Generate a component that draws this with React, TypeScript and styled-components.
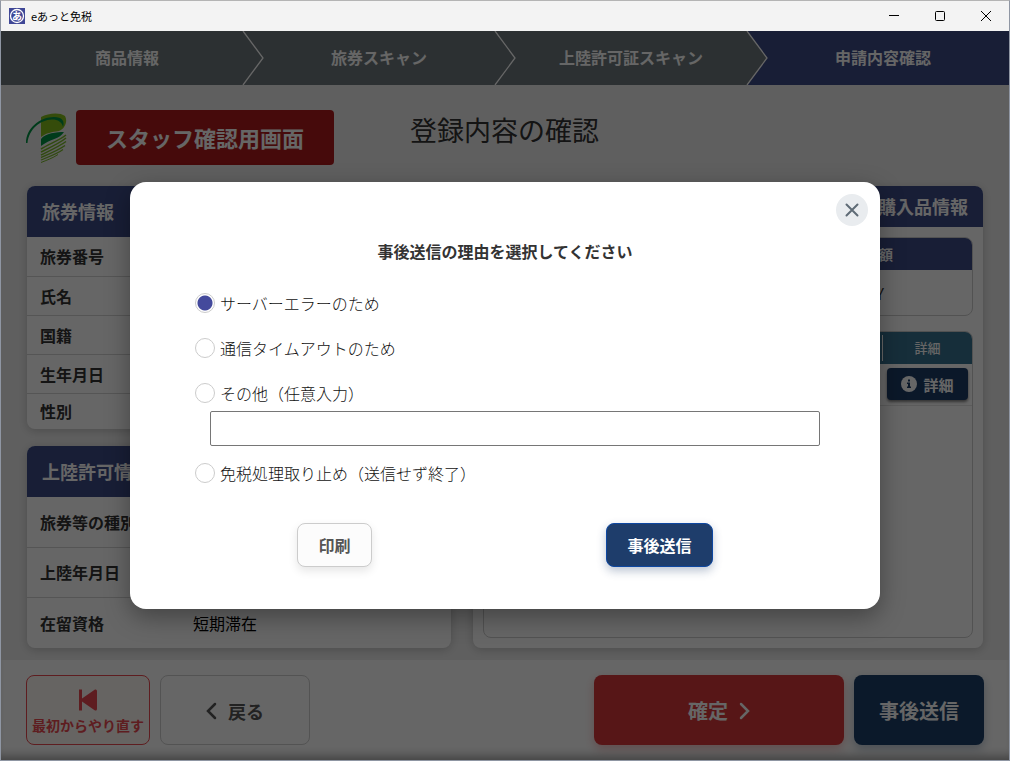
import React, { useState } from "react";
import styled, { createGlobalStyle } from "styled-components";

const Global = createGlobalStyle`
  *, *::before, *::after { box-sizing: border-box; }
  body {
    margin: 0;
    font-family: "Noto Sans CJK JP", "Noto Sans", sans-serif;
    font-size: 16px;
    color: #333;
  }
  button, input { font-family: inherit; }
  button { cursor: pointer; }
`;

const navy = "#3c4b87";
const slate = "#6e787d";

const Frame = styled.div`
  display: flex;
  flex-direction: column;
  min-height: 100vh;
  border: 1px solid #8f96a3;
  border-top-color: #b4b4b4;
`;

const TitleBar = styled.header`
  display: flex;
  align-items: center;
  height: 30px;
  padding-left: 8px;
  background: #f3f3f3;
  color: #000;
`;

const AppIcon = styled.svg`
  width: 16px;
  height: 16px;
  margin-right: 6px;
`;

const AppName = styled.span`
  flex: 1;
  font-size: 11px;
  line-height: 16px;
`;

const WindowButton = styled.button`
  display: flex;
  align-items: center;
  justify-content: center;
  width: 46px;
  height: 30px;
  padding: 0;
  border: 0;
  background: none;
`;

const Body = styled.div`
  position: relative;
  display: flex;
  flex: 1;
  flex-direction: column;
  background: #eee;
`;

const Steps = styled.ol`
  display: grid;
  grid-template-columns: repeat(4, 1fr);
  margin: 0;
  padding: 0;
  list-style: none;
`;

const Step = styled.li<{ $active?: boolean }>`
  position: relative;
  height: 54px;
  background: ${(p) => (p.$active ? navy : slate)};
  color: #fff;
  font-weight: 700;
  line-height: 52px;
  text-align: center;
`;

const StepArrow = styled.svg`
  position: absolute;
  top: 0;
  right: -12px;
  z-index: 1;
  width: 24px;
  height: 54px;
`;

const Main = styled.main`
  display: flex;
  flex: 1;
  flex-direction: column;
  padding: 25px 26px 12px 25px;
`;

const Heading = styled.div`
  display: grid;
  grid-template-columns: 1fr auto 1fr;
  align-items: start;
  margin-bottom: 21px;
`;

const Brand = styled.div`
  display: flex;
  align-items: center;
  gap: 8px;
`;

const Logo = styled.svg`
  width: 42px;
  height: 50px;
`;

const StaffLabel = styled.div`
  width: 258px;
  border-radius: 4px;
  background: #b01b1c;
  color: #fff;
  font-size: 22px;
  font-weight: 700;
  line-height: 55px;
  text-align: center;
`;

const PageTitle = styled.h1`
  margin: 0;
  font-size: 27px;
  font-weight: 400;
  line-height: 40px;
`;

const Columns = styled.div`
  display: grid;
  flex: 1;
  grid-template-columns: 424fr 510fr;
  gap: 22px;
  padding-left: 1px;
`;

const Stack = styled.div`
  display: flex;
  flex-direction: column;
  justify-content: space-between;
  gap: 16px;
`;

const Card = styled.section`
  display: flex;
  flex-direction: column;
  overflow: hidden;
  border-radius: 8px;
  background: #fff;
  box-shadow: 0 2px 10px rgba(0, 0, 0, 0.2);
`;

const CardTitle = styled.h2<{ $right?: boolean }>`
  margin: 0;
  padding: 0 15px;
  background: ${navy};
  color: #fff;
  font-size: 18px;
  font-weight: 700;
  line-height: ${(p) => (p.$right ? 41 : 51)}px;
  text-align: ${(p) => (p.$right ? "right" : "left")};
`;

const Facts = styled.table<{ $row: number; $last: number }>`
  width: 100%;
  border-collapse: collapse;

  tr + tr {
    border-top: 1px solid #d4d4d4;
  }
  th,
  td {
    height: ${(p) => p.$row}px;
    padding: 0 13px;
    line-height: 24px;
    text-align: left;
  }
  tr:last-child > * {
    height: ${(p) => p.$last}px;
  }
  th {
    width: 153px;
    font-weight: 700;
    white-space: nowrap;
  }
  td {
    color: #000;
  }
`;

const Purchase = styled.div`
  display: flex;
  flex: 1;
  flex-direction: column;
  gap: 15px;
  padding: 10px;
`;

const Box = styled.div<{ $grow?: boolean }>`
  flex: ${(p) => (p.$grow ? 1 : "none")};
  overflow: hidden;
  border: 1px solid #ccc;
  border-radius: 8px;
`;

const BoxTable = styled.table`
  width: 100%;
  border-collapse: collapse;
  text-align: right;
`;

const TotalHead = styled.th`
  height: 32px;
  padding: 0 79px;
  background: ${navy};
  color: #fff;
  font-size: 14px;
  font-weight: 700;
  line-height: 20px;
`;

const TotalCell = styled.td`
  height: 45px;
  padding: 0 88px;
`;

const ItemHead = styled.th`
  height: 32px;
  padding: 3px 0;
  background: #377391;
  color: #fff;
  font-size: 13px;
  font-weight: 500;
  line-height: 26px;
  text-align: center;

  &:last-child {
    width: 90px;
  }
  &:last-child > span {
    display: block;
    border-left: 1px solid #fff;
  }
`;

const ItemCell = styled.td`
  height: 41px;
  padding: 0 4px 0 5px;
  border-bottom: 1px solid #e4e4e4;
`;

const DetailButton = styled.button`
  display: flex;
  align-items: center;
  justify-content: center;
  gap: 6px;
  width: 81px;
  height: 32px;
  padding: 0;
  border: 0;
  border-radius: 4px;
  background: #1c3c68;
  box-shadow: 0 2px 3px rgba(0, 0, 0, 0.5);
  color: #fff;
  font-size: 15px;
  font-weight: 700;
`;

const Footer = styled.footer`
  display: flex;
  gap: 10px;
  padding: 15px 25px;
  background: #fff;
  box-shadow: inset 0 -10px 10px -6px rgba(0, 0, 0, 0.35);
`;

const FooterButton = styled.button<{ $kind: "restart" | "back" | "confirm" | "later" }>`
  display: flex;
  flex-direction: ${(p) => (p.$kind === "restart" ? "column" : "row")};
  align-items: center;
  justify-content: center;
  gap: ${(p) => (p.$kind === "restart" ? 3 : 10)}px;
  width: ${(p) => ({ restart: 124, back: 150, confirm: 250, later: 130 })[p.$kind]}px;
  height: 70px;
  margin-left: ${(p) => (p.$kind === "confirm" ? "auto" : 0)};
  padding: 2px 0 0;
  border: ${(p) => ({ restart: "1px solid #ec4a50", back: "1px solid #d0d0d0", confirm: "0", later: "0" })[p.$kind]};
  border-radius: 8px;
  background: ${(p) => ({ restart: "#fffaf6", back: "#fff", confirm: "#d9393b", later: "#1c406a" })[p.$kind]};
  box-shadow: ${(p) =>
    ({
      restart: "none",
      back: "none",
      confirm: "0 4px 10px rgba(217, 57, 59, 0.3)",
      later: "0 4px 10px rgba(28, 64, 106, 0.3)",
    })[p.$kind]};
  color: ${(p) => ({ restart: "#ec4a50", back: "#555", confirm: "#fff", later: "#fff" })[p.$kind]};
  font-size: ${(p) => ({ restart: 14, back: 18, confirm: 20, later: 20 })[p.$kind]}px;
  font-weight: 700;
  line-height: 20px;
`;

const Overlay = styled.div`
  position: absolute;
  inset: 0;
  z-index: 2;
  display: flex;
  align-items: center;
  justify-content: center;
  background: rgba(0, 0, 0, 0.6);
`;

const Dialog = styled.form`
  position: relative;
  width: 750px;
  max-width: 90%;
  padding: 57px 50px 42px;
  border-radius: 16px;
  background: #fff;
  box-shadow: 0 8px 24px rgba(0, 0, 0, 0.35);
`;

const CloseButton = styled.button`
  position: absolute;
  top: 12px;
  right: 12px;
  display: flex;
  align-items: center;
  justify-content: center;
  width: 32px;
  height: 32px;
  padding: 0;
  border: 0;
  border-radius: 50%;
  background: #e9ecef;
`;

const DialogTitle = styled.h2`
  margin: 0 0 28px;
  color: #333;
  font-size: 16px;
  font-weight: 700;
  line-height: 24px;
  text-align: center;
`;

const Reasons = styled.div`
  display: flex;
  flex-direction: column;
  gap: 21px;
  margin-bottom: 38px;
`;

const Reason = styled.label`
  display: flex;
  align-items: center;
  gap: 5px;
  padding-left: 15px;
  color: #111;
  font-weight: 300;
  line-height: 24px;
`;

const Radio = styled.input`
  appearance: none;
  width: 20px;
  height: 20px;
  margin: 0;
  padding: 2px;
  border: 1px solid #ccc;
  border-radius: 50%;

  &:checked {
    background: radial-gradient(circle, #444a9c 7px, #fff 8px);
  }
`;

const OtherReason = styled.div`
  display: flex;
  flex-direction: column;
  gap: 6px;
  margin-bottom: -6px;
`;

const OtherInput = styled.input`
  height: 35px;
  margin: 0 10px 0 30px;
  padding: 0 8px;
  border: 1px solid #767676;
  border-radius: 2px;
  font-size: 16px;
`;

const Actions = styled.div`
  display: flex;
  justify-content: space-around;
`;

const ActionButton = styled.button<{ $primary?: boolean }>`
  height: 44px;
  padding: 0 20px;
  border: 1px solid ${(p) => (p.$primary ? "#0d47a1" : "#ccc")};
  border-radius: 8px;
  background: ${(p) => (p.$primary ? "#1e3d6b" : "#fcfcfc")};
  box-shadow: 0 4px 10px ${(p) => (p.$primary ? "rgba(30, 61, 107, 0.3)" : "rgba(0, 0, 0, 0.1)")};
  color: ${(p) => (p.$primary ? "#fff" : "#555")};
  font-size: 16px;
  font-weight: 700;
`;

function Arrow({ next }: { next: string }) {
  return (
    <StepArrow viewBox="0 0 24 54" aria-hidden="true">
      <rect width="24" height="54" fill={next} />
      <path d="M0 0H2L22 27L2 54H0Z" fill={slate} />
      <path d="M2 0L22 27L2 54" fill="none" stroke="#fff" strokeWidth="1.3" />
    </StepArrow>
  );
}

function BrandLogo() {
  return (
    <Logo viewBox="0 0 42 50" aria-hidden="true">
      <path d="M15 4C22 0 34 -1 39 3C42 8 39 16 33 18C26 19 20 20 15 24Z" fill="#86bf1c" />
      <path d="M0 30C0 15 14 4 28 4C36 4 39 8 37 14C36 9 32 6.500 26 6.500C14 7 3 16 1.500 30Z" fill="#009444" />
      <path d="M15 26C19 20 31 19 38 19C34 26 24 26 15 33Z" fill="#009444" />
      <g fill="none" stroke="#7ab82a" strokeWidth="1.500">
        <path d="M15 36C23 31 34 27 40 22" />
        <path d="M15 39C23 35 34 30 40 25" />
        <path d="M15 42C23 38 34 33 40 28.500" />
        <path d="M15 44.500C22 41.500 33 37 39 32.500" />
        <path d="M15 47C21 44.500 31 41 37 36.500" strokeWidth="1.200" />
        <path d="M15 49.500C20 47.500 27 45 32 41.500" strokeWidth="1" />
      </g>
    </Logo>
  );
}

const passportRows = ["旅券番号", "氏名", "国籍", "生年月日", "性別"];
const landingRows: [string, string][] = [
  ["旅券等の種別", ""],
  ["上陸年月日", ""],
  ["在留資格", "短期滞在"],
];

export default function App() {
  const [reason, setReason] = useState("server");

  const radio = (value: string, text: string) => (
    <Reason>
      <Radio type="radio" name="reason" value={value} checked={reason === value} onChange={() => setReason(value)} />
      {text}
    </Reason>
  );

  return (
    <Frame>
      <Global />
      <TitleBar>
        <AppIcon viewBox="0 0 16 16" aria-hidden="true">
          <rect width="16" height="16" fill="#3f4796" />
          <circle cx="8" cy="8" r="6.5" fill="#3f4796" stroke="#fff" strokeWidth="1.300" />
          <text x="8" y="11.500" fill="#fff" fontSize="10" fontWeight="700" textAnchor="middle">
            あ
          </text>
        </AppIcon>
        <AppName>eあっと免税</AppName>
        <WindowButton type="button" aria-label="最小化">
          <svg width="10" height="10" viewBox="0 0 10 10">
            <path d="M0 4.500H10" stroke="#000" />
          </svg>
        </WindowButton>
        <WindowButton type="button" aria-label="最大化">
          <svg width="10" height="10" viewBox="0 0 10 10">
            <rect x="0.500" y="0.500" width="9" height="9" rx="1" fill="none" stroke="#000" />
          </svg>
        </WindowButton>
        <WindowButton type="button" aria-label="ウィンドウを閉じる">
          <svg width="10" height="10" viewBox="0 0 10 10">
            <path d="M0 0L10 10M10 0L0 10" stroke="#000" />
          </svg>
        </WindowButton>
      </TitleBar>

      <Body>
        <Steps>
          <Step>
            商品情報
            <Arrow next={slate} />
          </Step>
          <Step>
            旅券スキャン
            <Arrow next={slate} />
          </Step>
          <Step>
            上陸許可証スキャン
            <Arrow next={navy} />
          </Step>
          <Step $active aria-current="step">
            申請内容確認
          </Step>
        </Steps>

        <Main>
          <Heading>
            <Brand>
              <BrandLogo />
              <StaffLabel>スタッフ確認用画面</StaffLabel>
            </Brand>
            <PageTitle>登録内容の確認</PageTitle>
          </Heading>

          <Columns>
            <Stack>
              <Card>
                <CardTitle>旅券情報</CardTitle>
                <Facts $row={39} $last={36}>
                  <tbody>
                    {passportRows.map((name) => (
                      <tr key={name}>
                        <th scope="row">{name}</th>
                        <td />
                      </tr>
                    ))}
                  </tbody>
                </Facts>
              </Card>
              <Card>
                <CardTitle>上陸許可情報</CardTitle>
                <Facts $row={50} $last={51}>
                  <tbody>
                    {landingRows.map(([name, value]) => (
                      <tr key={name}>
                        <th scope="row">{name}</th>
                        <td>{value}</td>
                      </tr>
                    ))}
                  </tbody>
                </Facts>
              </Card>
            </Stack>

            <Card>
              <CardTitle $right>購入品情報</CardTitle>
              <Purchase>
                <Box>
                  <BoxTable>
                    <thead>
                      <tr>
                        <TotalHead scope="col">金額</TotalHead>
                      </tr>
                    </thead>
                    <tbody>
                      <tr>
                        <TotalCell>JPY</TotalCell>
                      </tr>
                    </tbody>
                  </BoxTable>
                </Box>
                <Box $grow>
                  <BoxTable>
                    <thead>
                      <tr>
                        <ItemHead as="td" />
                        <ItemHead scope="col">
                          <span>詳細</span>
                        </ItemHead>
                      </tr>
                    </thead>
                    <tbody>
                      <tr>
                        <ItemCell />
                        <ItemCell>
                          <DetailButton type="button">
                            <svg width="16" height="16" viewBox="0 0 16 16" aria-hidden="true">
                              <circle cx="8" cy="8" r="8" fill="#fff" />
                              <path
                                d="M7 3.500H9V5.500H7ZM6 6.500H9V10.500H10V12H6V10.500H7V8H6Z"
                                fill="#1c3c68"
                              />
                            </svg>
                            詳細
                          </DetailButton>
                        </ItemCell>
                      </tr>
                    </tbody>
                  </BoxTable>
                </Box>
              </Purchase>
            </Card>
          </Columns>
        </Main>

        <Footer>
          <FooterButton type="button" $kind="restart">
            <svg width="20" height="24" viewBox="0 0 20 24" aria-hidden="true">
              <path d="M1 1.500H4V10.500L17 1.500Q19 1 19 3V21Q19 23 17 22.500L4 13.500V22.500H1Z" fill="currentColor" />
            </svg>
            最初からやり直す
          </FooterButton>
          <FooterButton type="button" $kind="back">
            <svg width="12" height="18" viewBox="0 0 12 18" aria-hidden="true">
              <path d="M9 2L2 9L9 16" fill="none" stroke="currentColor" strokeWidth="2.500" strokeLinecap="round" />
            </svg>
            戻る
          </FooterButton>
          <FooterButton type="button" $kind="confirm">
            確定
            <svg width="12" height="18" viewBox="0 0 12 18" aria-hidden="true">
              <path d="M3 2L10 9L3 16" fill="none" stroke="currentColor" strokeWidth="2.500" strokeLinecap="round" />
            </svg>
          </FooterButton>
          <FooterButton type="button" $kind="later">
            事後送信
          </FooterButton>
        </Footer>

        <Overlay>
          <Dialog role="dialog" aria-modal="true" aria-labelledby="reason-title" onSubmit={(e) => e.preventDefault()}>
            <CloseButton type="button" aria-label="閉じる">
              <svg width="14" height="14" viewBox="0 0 14 14">
                <path d="M1.500 1.500L12.500 12.500M12.500 1.500L1.500 12.500" stroke="#5f6b76" strokeWidth="2" strokeLinecap="round" />
              </svg>
            </CloseButton>
            <DialogTitle id="reason-title">事後送信の理由を選択してください</DialogTitle>
            <Reasons>
              {radio("server", "サーバーエラーのため")}
              {radio("timeout", "通信タイムアウトのため")}
              <OtherReason>
                {radio("other", "その他（任意入力）")}
                <OtherInput type="text" aria-label="その他の理由" />
              </OtherReason>
              {radio("cancel", "免税処理取り止め（送信せず終了）")}
            </Reasons>
            <Actions>
              <ActionButton type="button">印刷</ActionButton>
              <ActionButton type="submit" $primary>
                事後送信
              </ActionButton>
            </Actions>
          </Dialog>
        </Overlay>
      </Body>
    </Frame>
  );
}
